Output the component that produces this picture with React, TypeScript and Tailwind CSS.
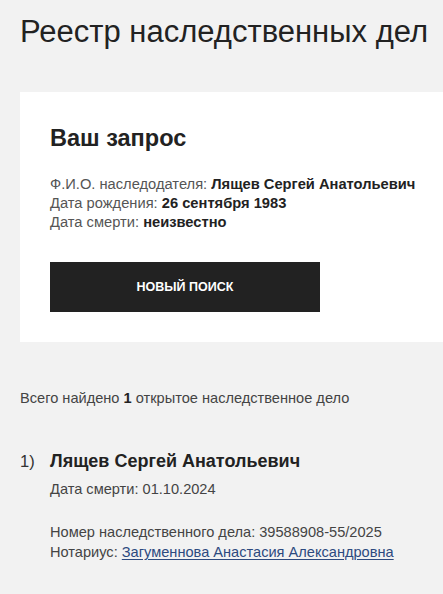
export default function App() {
  return (
    <div className="min-h-screen w-[443px] overflow-hidden bg-[#f2f2f2] font-['Liberation_Sans',Arial,sans-serif] text-[#222]">
      <h1 className="px-5 pt-[13px] text-[31px] leading-[38px] whitespace-nowrap text-[#222]">
        Реестр наследственных дел
      </h1>

      <section className="ml-5 mt-[41px] w-[440px] bg-white pl-[30px] pt-[31px] pb-[30px]">
        <h2 className="text-[23.5px] leading-[30px] font-bold text-[#222]">Ваш запрос</h2>
        <div className="mt-[22px] text-[14.7px] leading-[19px] text-[#555] whitespace-nowrap">
          <p>
            Ф.И.О. наследодателя: <b className="text-[#222]">Лящев Сергей Анатольевич</b>
          </p>
          <p>
            Дата рождения: <b className="text-[#222]">26 сентября 1983</b>
          </p>
          <p>
            Дата смерти: <b className="text-[#222]">неизвестно</b>
          </p>
        </div>
        <button className="mt-[30px] flex h-[50px] w-[270px] items-center justify-center bg-[#222] text-[12.5px] font-bold uppercase text-white">
          Новый поиск
        </button>
      </section>

      <p className="px-5 mt-[46px] text-[14.6px] leading-[20px] text-[#444]">
        Всего найдено <b className="text-[#222]">1</b> открытое наследственное дело
      </p>

      <div className="mt-[41px] flex px-5">
        <span className="w-[30px] text-[16.5px] leading-[24px] text-[#333]">1)</span>
        <div>
          <p className="text-[18px] leading-[24px] font-bold text-[#222]">Лящев Сергей Анатольевич</p>
          <p className="mt-[6px] text-[14.6px] leading-[20px] text-[#444]">Дата смерти: 01.10.2024</p>
          <div className="mt-[23px] text-[14.6px] leading-[20px] text-[#444] whitespace-nowrap">
            <p>Номер наследственного дела: 39588908-55/2025</p>
            <p>
              Нотариус:{" "}
              <a href="#" className="text-[#2d4a7f] underline underline-offset-2">
                Загуменнова Анастасия Александровна
              </a>
            </p>
          </div>
        </div>
      </div>
    </div>
  );
}
